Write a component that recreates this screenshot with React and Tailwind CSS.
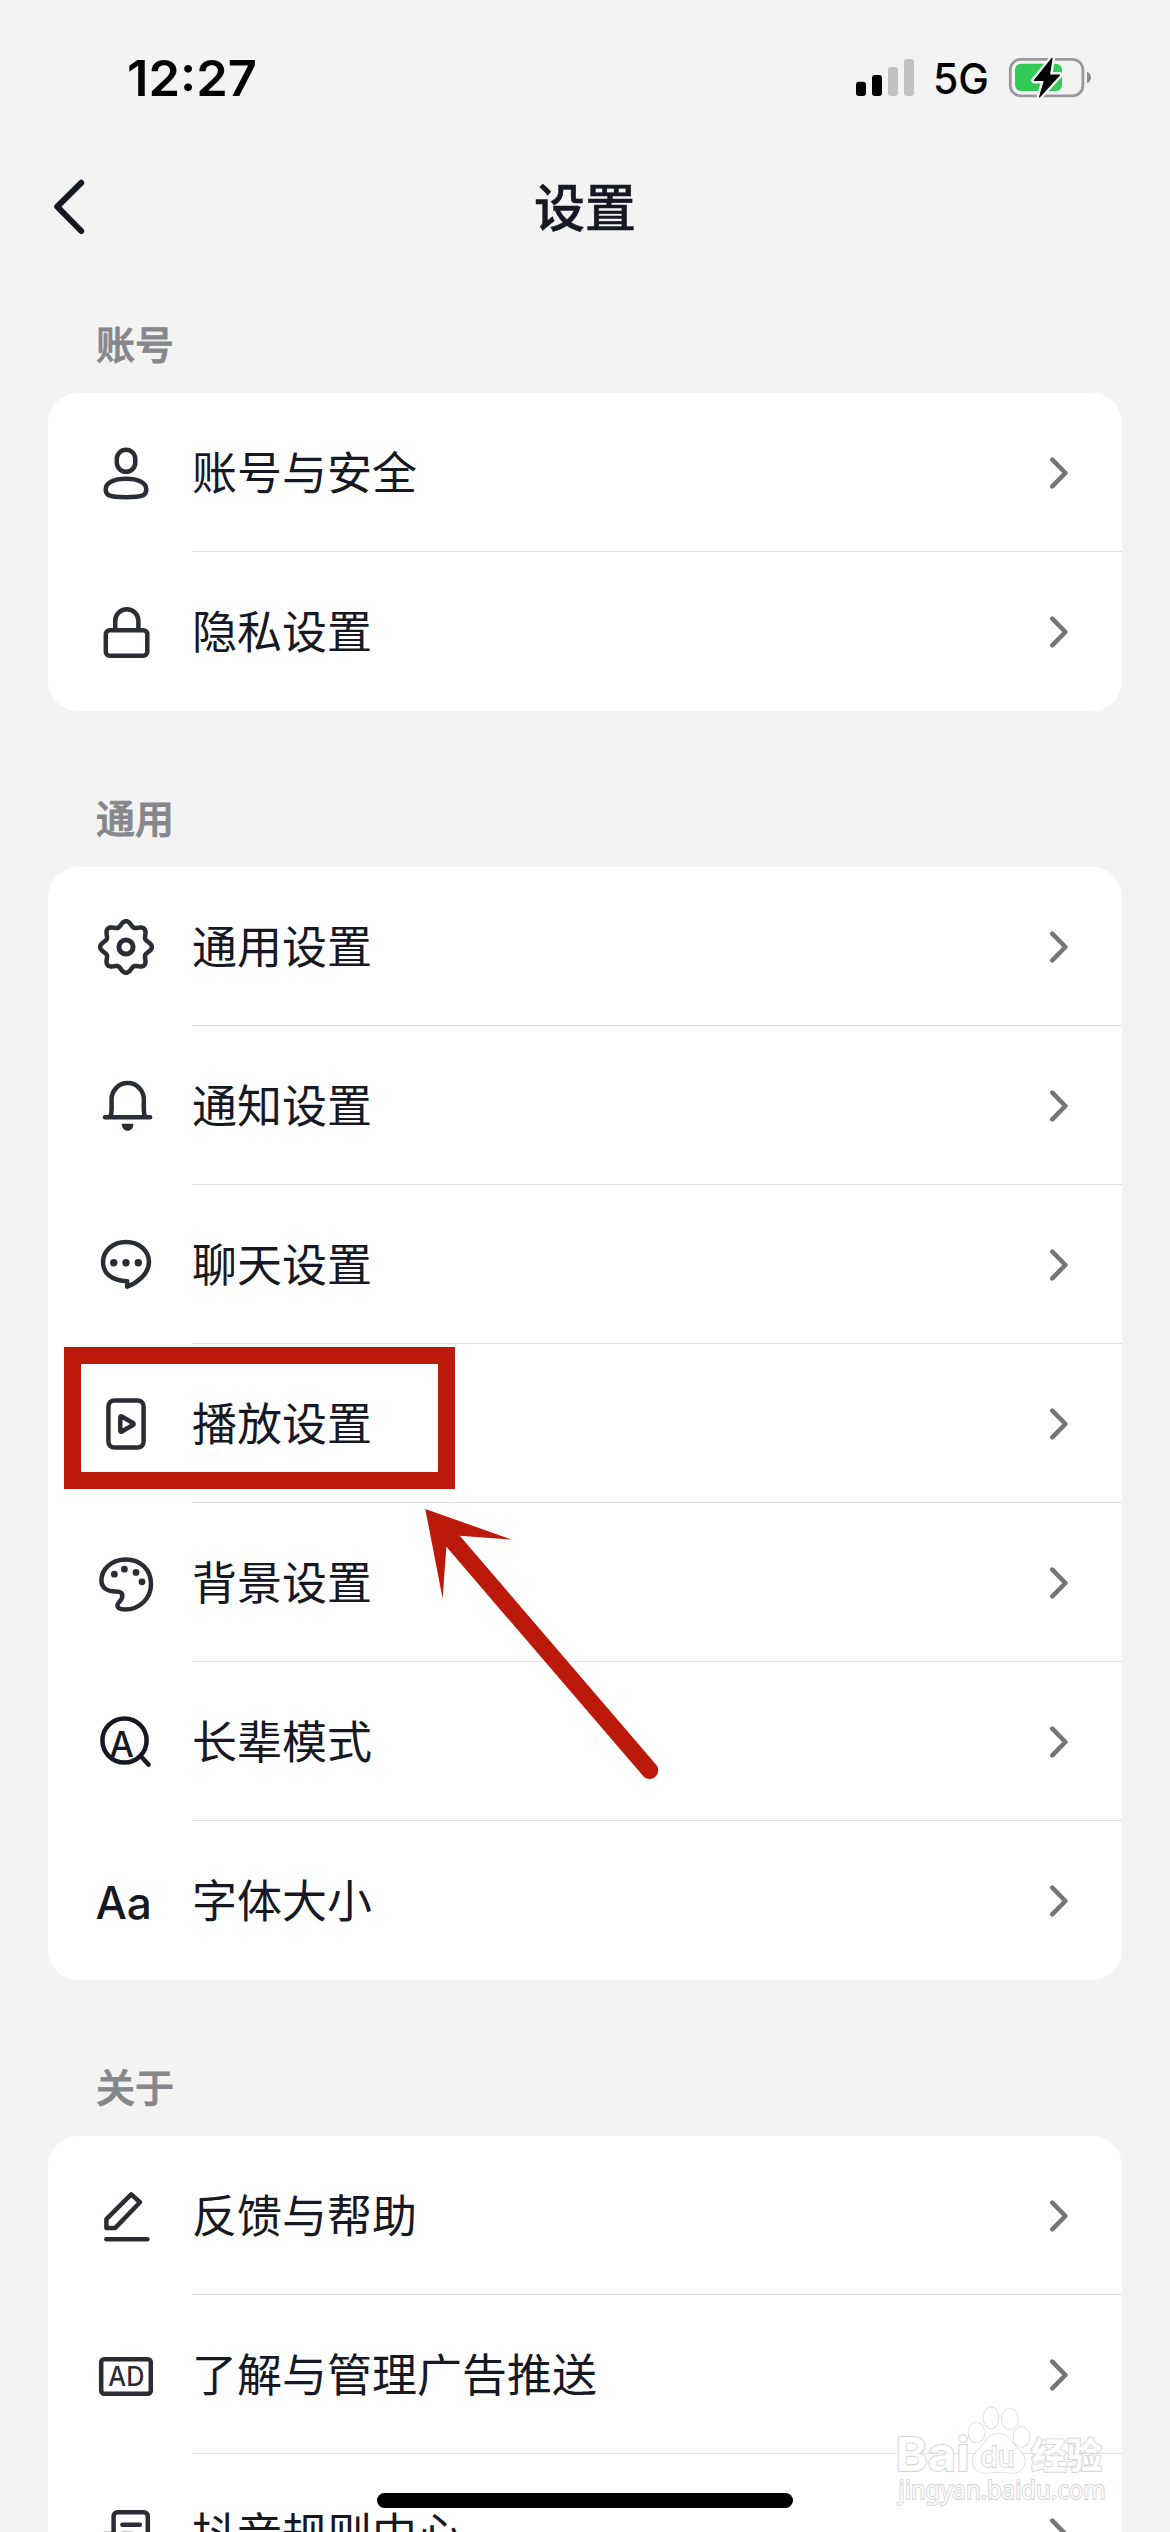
import React from "react";

function Icon({ children, color = "#2a2c36" }) {
  return (
    <svg
      width="60"
      height="61"
      viewBox="0 0 60 61"
      fill="none"
      stroke={color}
      strokeWidth="4.5"
      strokeLinecap="round"
      strokeLinejoin="round"
      className="shrink-0"
    >
      {children}
    </svg>
  );
}

function gearPath(cx, cy, base, amp) {
  const points = [];
  for (let i = 0; i < 160; i += 1) {
    const t = (i / 160) * Math.PI * 2;
    const r = base + amp * Math.cos(8 * t);
    points.push(`${(cx + r * Math.cos(t)).toFixed(2)} ${(cy + r * Math.sin(t)).toFixed(2)}`);
  }
  return `M${points.join("L")}Z`;
}

const icons = {
  user: (
    <Icon>
      <rect x="20.8" y="7.8" width="18.5" height="22" rx="9.2" />
      <path d="M30 36.8C18 36.8 9.7 40.5 9.7 47.5C9.7 53 12 55.2 30 55.2C48 55.2 50.3 53 50.3 47.5C50.3 40.5 42 36.8 30 36.8Z" />
    </Icon>
  ),
  lock: (
    <Icon>
      <rect x="9.8" y="29.2" width="41.5" height="25.6" rx="4" />
      <path d="M19.2 28.5V19.9a11.6 11.6 0 0 1 23.2 0V28.5" />
    </Icon>
  ),
  gear: (
    <Icon>
      <path d={gearPath(30, 31, 23.3, 2.5)} />
      <circle cx="30" cy="31" r="7.1" strokeWidth="5" />
    </Icon>
  ),
  bell: (
    <Icon>
      <path d="M9 42.2H54" />
      <path d="M14.3 41.6C15.4 39.6 15.6 37.5 15.6 34V24.2a16.1 16.1 0 0 1 32.2 0V34C47.8 37.5 48 39.6 49.1 41.6" />
      <path d="M25.8 48.8H37.4C37.4 53.4 34.8 55.8 31.6 55.8S25.8 53.4 25.8 48.8Z" fill="#2a2c36" stroke="none" />
    </Icon>
  ),
  chat: (
    <Icon>
      <path d="M30 8C17 8 7 16.8 7 28C7 39.5 16 47 31.2 47.2V52.7C41 49 53 40 53 28C53 16.8 43 8 30 8Z" />
      <g fill="#2a2c36" stroke="none">
        <circle cx="17.7" cy="28.7" r="3.7" />
        <circle cx="30" cy="28.7" r="3.7" />
        <circle cx="42.3" cy="28.7" r="3.7" />
      </g>
    </Icon>
  ),
  play: (
    <Icon>
      <rect x="12.4" y="7.4" width="35.2" height="47.2" rx="6" />
      <path d="M24.3 24.2V37.8C24.3 38.6 25 39 25.8 38.5L37 32C37.8 31.5 37.8 30.5 37 30L25.8 23.5C25 23 24.3 23.4 24.3 24.2Z" />
    </Icon>
  ),
  palette: (
    <Icon>
      <path d="M30 7.4C15 7.4 5.4 17.5 5.4 28.5C5.4 36 11.5 39.5 19 39.5C24.5 39.2 27.4 41 26 45.8C25 49 21.4 50.6 21.4 53.6C21.4 56.8 25 57.5 29 57.5C44 57.5 55 46 55 32C55 17 44 7.4 30 7.4Z" />
      <g fill="#2a2c36" stroke="none">
        <circle cx="18.4" cy="22.2" r="3.4" />
        <circle cx="28.4" cy="17.2" r="3.4" />
        <circle cx="40" cy="20.4" r="3.4" />
        <circle cx="46" cy="29.8" r="3.4" />
      </g>
    </Icon>
  ),
  elder: (
    <Icon color="#161823">
      <circle cx="28.5" cy="29.5" r="22.1" />
      <path d="M45.5 46L52.6 53.6" />
      <text x="13.6" y="45.6" fontSize="35.5" fontWeight="500" textLength="24.4" lengthAdjust="spacingAndGlyphs" fill="#161823" stroke="none">A</text>
    </Icon>
  ),
  font: (
    <Icon color="#161823">
      <text x="-0.5" y="49" fontSize="44.5" fontWeight="500" textLength="56.500" lengthAdjust="spacingAndGlyphs" fill="#161823" stroke="none">Aa</text>
    </Icon>
  ),
  edit: (
    <Icon>
      <path d="M10.4 34.2V43.1H19L44 17.2L35.2 9.4Z" />
      <path d="M10.4 54.3H51.4" />
    </Icon>
  ),
  ad: (
    <Icon>
      <rect x="5.2" y="15.2" width="49.6" height="34.6" rx="3" />
      <text x="12.3" y="42" fontSize="26.5" fontWeight="500" textLength="36" lengthAdjust="spacingAndGlyphs" fill="#2a2c36" stroke="none">AD</text>
    </Icon>
  ),
  rules: (
    <Icon>
      <path d="M17.6 40V13.2a4 4 0 0 1 4-4H47.8a4 4 0 0 1 4 4V50" />
      <path d="M26.4 21.8H43.8M26.4 31H36M17 31H8.6" />
    </Icon>
  ),
};

const sections = [
  {
    title: "账号",
    rows: [
      ["user", "账号与安全"],
      ["lock", "隐私设置"],
    ],
  },
  {
    title: "通用",
    rows: [
      ["gear", "通用设置"],
      ["bell", "通知设置"],
      ["chat", "聊天设置"],
      ["play", "播放设置"],
      ["palette", "背景设置"],
      ["elder", "长辈模式"],
      ["font", "字体大小"],
    ],
  },
  {
    title: "关于",
    rows: [
      ["edit", "反馈与帮助"],
      ["ad", "了解与管理广告推送"],
      ["rules", "抖音规则中心"],
    ],
  },
];

function Row({ icon, label, last }) {
  return (
    <div className="flex h-[159px] items-center pl-12">
      {icons[icon]}
      <div
        className={
          last
            ? "ml-9 flex h-full flex-1 items-center justify-between border-b border-transparent pr-[54px]"
            : "ml-9 flex h-full flex-1 items-center justify-between border-b border-[#e1e1e3] pr-[54px]"
        }
      >
        <span className="pt-1 text-[45px] leading-[60px] text-[#161823]">{label}</span>
        <svg width="18" height="32" viewBox="0 0 18 32" fill="none" stroke="#75767b" strokeWidth="4.6" strokeLinecap="round" strokeLinejoin="round" className="mt-px">
          <path d="M2.3 2.7L15.4 16L2.3 29.3" />
        </svg>
      </div>
    </div>
  );
}

function Section({ title, rows }) {
  return (
    <section className="px-12 pt-[60px]">
      <h2 className="flex h-24 items-center pl-12 text-[39px] font-medium text-[#86878c] [-webkit-text-stroke:0.9px_#86878c]">{title}</h2>
      <div className="rounded-[30px] bg-white">
        {rows.map(([icon, label], i) => (
          <Row key={label} icon={icon} label={label} last={i === rows.length - 1} />
        ))}
      </div>
    </section>
  );
}

function StatusBar() {
  return (
    <div className="flex h-[177px] items-start justify-between pl-[126px] pr-[78px] pt-12">
      <svg width="132" height="60" viewBox="0 0 132 60">
        <text x="1" y="48" fontSize="49.5" fontWeight="600" textLength="130" lengthAdjust="spacingAndGlyphs">12:27</text>
      </svg>
      <svg width="238" height="60" viewBox="854 48 238 60">
        <rect x="856" y="81.7" width="10" height="14.3" rx="3" />
        <rect x="872" y="75" width="10" height="21" rx="3" />
        <rect x="888" y="67" width="10" height="29" rx="3" fill="#c2c2c2" />
        <rect x="904" y="59" width="10" height="37" rx="3" fill="#c2c2c2" />
        <text x="933" y="94.3" fontSize="42" fontWeight="500" textLength="56" lengthAdjust="spacingAndGlyphs">5G</text>
        <rect x="1010.3" y="59.3" width="72.6" height="36.6" rx="10.5" fill="none" stroke="#9b989c" strokeWidth="2.8" />
        <path d="M1087 71.7C1092.3 74 1092.3 81 1087 83.3Z" fill="#8c8a8e" />
        <rect x="1015" y="63.7" width="47" height="27.3" rx="6" fill="#32cb58" />
        <path
          d="M1052.2 58L1034 80.6H1044.3L1039.4 97L1059.8 74.8H1049.6Z"
          stroke="#f3f3f3"
          strokeWidth="5.6"
          strokeLinejoin="round"
        />
        <path d="M1052 58.4L1034.4 80.3H1044.5L1039.6 96.8L1059.4 75H1049.4Z" stroke="#000" strokeWidth="1.2" strokeLinejoin="round" />
      </svg>
    </div>
  );
}

function NavBar() {
  return (
    <header className="flex h-[60px] items-center px-12">
      <svg width="42" height="60" viewBox="0 0 42 60" fill="none" stroke="#161823" strokeWidth="6" strokeLinecap="round" strokeLinejoin="round">
        <path d="M33.2 5.8L9.2 29.6L33.2 54" />
      </svg>
      <h1 className="flex-1 pt-1 text-center text-[51px] font-medium leading-[60px] text-[#161823] [-webkit-text-stroke:0.5px_#161823]">设置</h1>
      <div className="w-[42px]" />
    </header>
  );
}

function Watermark() {
  return (
    <svg
      className="absolute left-[890px] top-[2400px]"
      width="230"
      height="112"
      viewBox="890 2400 230 112"
      fill="#ffffff"
      fillOpacity="0.85"
      stroke="#d6d6d6"
      strokeWidth="1.3"
      paintOrder="stroke"
    >
      <ellipse cx="976.5" cy="2432.5" rx="8.2" ry="10.2" />
      <ellipse cx="991" cy="2417.8" rx="7.6" ry="10.6" />
      <ellipse cx="1009.8" cy="2419" rx="8.2" ry="10.2" />
      <ellipse cx="1021.5" cy="2437" rx="8.2" ry="10" />
      <path d="M998.5 2433.5C1010 2433.5 1011 2443 1018 2449C1024 2454 1027 2460 1023.5 2467C1018 2476 1009 2472 998.5 2472C988 2472 979 2476 974 2467C970.5 2460 973.5 2454 979 2449C986 2443 987 2433.5 998.5 2433.5Z" />
      <g strokeWidth="1.8">
        <text x="895.5" y="2471" fontSize="47" fontWeight="700" textLength="74" lengthAdjust="spacingAndGlyphs">Bai</text>
        <text x="980.5" y="2466.5" fontSize="29" fontWeight="500" textLength="34" lengthAdjust="spacingAndGlyphs">du</text>
        <text x="1031" y="2469" fontSize="36" fontWeight="900" textLength="71" lengthAdjust="spacingAndGlyphs">经验</text>
        <text x="898.5" y="2499" fontSize="25" textLength="207" lengthAdjust="spacingAndGlyphs" className="font-['Noto_Sans',sans-serif]">jingyan.baidu.com</text>
      </g>
    </svg>
  );
}

function Annotation() {
  return (
    <>
      <div className="absolute left-16 top-[1347px] h-[142px] w-[391px] border-[17px] border-[#bb190a]" />
      <svg className="absolute left-[420px] top-[1500px]" width="250" height="290" viewBox="420 1500 250 290" fill="#bb190a">
        <path d="M425.3 1509L511.5 1539.5L459.8 1535.8L656.8 1765.5A8.7 8.7 0 0 1 644 1777L446.4 1546.8L442.6 1598.5Z" />
      </svg>
    </>
  );
}

export default function App() {
  return (
    <main className="relative h-[2532px] w-[1170px] overflow-hidden bg-[#f3f3f3] font-['Inter','Noto_Sans_CJK_SC',sans-serif]">
      <StatusBar />
      <NavBar />
      {sections.map((s) => (
        <Section key={s.title} {...s} />
      ))}
      <Annotation />
      <Watermark />
      <div className="absolute left-[377px] top-[2493px] h-[15px] w-[416px] rounded-full bg-black" />
    </main>
  );
}
